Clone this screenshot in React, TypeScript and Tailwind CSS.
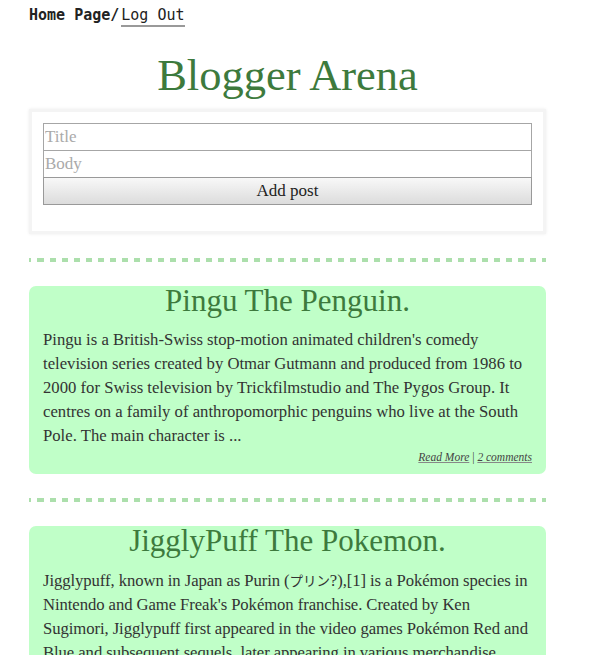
import React from 'react';

interface PostProps {
  title: string;
  body: React.ReactNode;
  comments?: string;
  bodyClass?: string;
}

const serif = "font-['Georgia','Liberation_Serif',serif]";

const Divider = () => (
  <div className="mt-[24px] mb-[24px] h-[4px] bg-[repeating-linear-gradient(90deg,#acdfac_0_6px,transparent_6px_12px)] bg-[position:9px_0]" />
);

const Post = ({ title, body, comments, bodyClass = '' }: PostProps) => (
  <div className="rounded-[7px] bg-[#c0ffc8] px-[14px] pt-0 pb-[10px]">
    <h2 className="text-center text-[31px] leading-[30px] text-[#3d7a3d]">{title}</h2>
    <p className={`mt-[12px] text-[16.7px] leading-[24px] text-[#333] ${bodyClass}`}>{body}</p>
    {comments && (
      <div className="mt-[2px] text-right text-[11.5px] italic leading-[14px] text-[#444]">
        <a href="#" className="underline decoration-[#888]">Read More</a>
        <span className="not-italic"> | </span>
        <a href="#" className="underline decoration-[#888]">{comments}</a>
      </div>
    )}
  </div>
);

export default function App() {
  return (
    <div className={`min-h-[655px] bg-white ${serif}`}>
      <div className="w-[517px] ml-[29px] pt-[4px]">
        <nav className="font-['DejaVu_Sans_Mono',monospace] text-[15px] leading-[22px] text-[#222]">
          <span className="font-bold">Home Page/</span>
          <a href="#" className="ml-[2px] border-b-2 border-[#999] pb-[1px]">Log Out</a>
        </nav>

        <h1 className="mt-[26px] text-center text-[44.5px] leading-[46px] text-[#3d7a3d]">Blogger Arena</h1>

        <div className="mt-[11px] border-[3px] border-[#f4f4f4] shadow-[0_0_3px_rgba(0,0,0,0.08)] px-[11px] pt-[11px] pb-[26px]">
          <input
            placeholder="Title"
            className="block w-full h-[28px] border border-[#a6a6a6] px-[1px] text-[17px] placeholder:text-[#aaa] outline-none"
          />
          <input
            placeholder="Body"
            className="block w-full h-[28px] -mt-px border border-[#a6a6a6] px-[1px] text-[17px] placeholder:text-[#aaa] outline-none"
          />
          <button className="block w-full h-[28px] -mt-px border border-[#999] bg-gradient-to-b from-[#f8f8f8] to-[#dcdcdc] text-[17px] text-[#222]">
            Add post
          </button>
        </div>

        <Divider />

        <Post
          title="Pingu The Penguin."
          body="Pingu is a British-Swiss stop-motion animated children's comedy television series created by Otmar Gutmann and produced from 1986 to 2000 for Swiss television by Trickfilmstudio and The Pygos Group. It centres on a family of anthropomorphic penguins who live at the South Pole. The main character is ..."
          comments="2 comments"
        />

        <Divider />

        <Post
          title="JigglyPuff The Pokemon."
          bodyClass="tracking-[-0.08px]"
          body={
            <>
              Jigglypuff, known in Japan as Purin (
              <span className="font-['Noto_Sans_CJK_JP',sans-serif] text-[13.5px]">プリン</span>
              ?),[1] is a Pokémon species in Nintendo and Game Freak's Pokémon franchise. Created by Ken Sugimori, Jigglypuff first appeared in the video games Pokémon Red and Blue and subsequent sequels, later appearing in various merchandise, spinoff titles and animated and printed adaptations of the franchise.
            </>
          }
          comments="1 comments"
        />
      </div>
    </div>
  );
}
